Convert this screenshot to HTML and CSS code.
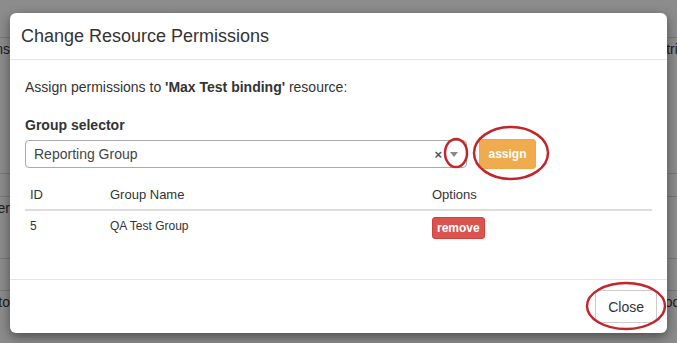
FILE: index.html
```html
<!DOCTYPE html>
<html lang="en">
<head>
    <meta charset="UTF-8">
    <meta name="viewport" content="width=device-width, initial-scale=1.0">
    <title>Change Resource Permissions</title>
    <link rel="stylesheet" href="styles.css">
</head>
<body>
    <!-- page behind the backdrop -->
    <div class="page">
        <div class="bg-row r0"></div>
        <div class="bg-row r1">
            <span class="cut-left">Permissions</span>
            <span class="cut-right">Attributes</span>
        </div>
        <div class="bg-row r2"></div>
        <div class="bg-row r3">
            <span class="cut-left">Owner</span>
        </div>
        <div class="bg-row r4"></div>
        <div class="bg-row r5">
            <span class="cut-left">Created to</span>
            <span class="cut-right">Modified</span>
        </div>
    </div>

    <div class="modal">
        <div class="modal-header">
            <h4 class="modal-title">Change Resource Permissions</h4>
        </div>
        <div class="modal-body">
            <p class="intro">Assign permissions to <b>'Max Test binding'</b> resource:</p>
            <label class="field-label">Group selector</label>
            <div class="selector-row">
                <div class="select-box">
                    <span class="select-value">Reporting Group</span>
                    <span class="select-clear">&times;</span>
                    <span class="select-arrow"></span>
                </div>
                <button class="btn btn-warning">assign</button>
            </div>
            <table class="perm-table">
                <thead>
                    <tr>
                        <th class="col-id">ID</th>
                        <th class="col-name">Group Name</th>
                        <th>Options</th>
                    </tr>
                </thead>
                <tbody>
                    <tr>
                        <td>5</td>
                        <td>QA Test Group</td>
                        <td><button class="btn btn-danger">remove</button></td>
                    </tr>
                </tbody>
            </table>
        </div>
        <div class="modal-footer">
            <button class="btn btn-default">Close</button>
        </div>
    </div>

    <!-- red annotation marks -->
    <svg class="marks" width="677" height="343" viewBox="0 0 677 343">
        <ellipse cx="456" cy="153" rx="11" ry="14" />
        <ellipse cx="511" cy="153" rx="37" ry="26" />
        <ellipse cx="626" cy="306" rx="39" ry="23" />
    </svg>
</body>
</html>
```

FILE: styles.css
```css
body {
    margin: 0;
    width: 677px;
    height: 343px;
    overflow: hidden;
    position: relative;
    background-color: #8c8c8c;
    font-family: "Liberation Sans", Arial, sans-serif;
    font-size: 14px;
    color: #333;
}

/* background page */
.bg-row {
    display: flex;
    justify-content: space-between;
    box-sizing: border-box;
    border-bottom: 1px solid #787878;
    line-height: 20px;
    padding-top: 1px;
    color: #1c1c1c;
}
.r0 { height: 38px; }
.r1 { height: 136px; }
.r2 { height: 23px; }
.r3 { height: 62px; }
.r4 { height: 32px; }
.r5 { height: 52px; border-bottom: none; }
.cut-left {
    width: 10px;
    display: flex;
    justify-content: flex-end;
    overflow: hidden;
    white-space: nowrap;
}
.cut-right {
    width: 24px;
    overflow: hidden;
    white-space: nowrap;
}

/* modal */
.modal {
    position: absolute;
    left: 10px;
    top: 13px;
    width: 657px;
    height: 320px;
    box-sizing: border-box;
    background-color: #fff;
    border-radius: 6px;
    box-shadow: 0 4px 12px rgba(0, 0, 0, 0.45);
    display: flex;
    flex-direction: column;
}
.modal-header {
    padding: 10px 11px;
    border-bottom: 1px solid #e5e5e5;
}
.modal-title {
    margin: 0;
    font-size: 18px;
    font-weight: normal;
    line-height: 26px;
    color: #333;
}
.modal-body {
    padding: 17px 15px 15px;
    flex: 1;
}
.intro {
    margin: 0 0 18px;
    line-height: 20px;
}
.field-label {
    display: block;
    font-weight: bold;
    line-height: 20px;
    margin-bottom: 5px;
}
.selector-row {
    display: flex;
    align-items: center;
    height: 30px;
    margin-top: -1px;
}
.select-box {
    width: 442px;
    height: 28px;
    box-sizing: border-box;
    border: 1px solid #aaa;
    border-radius: 4px;
    display: flex;
    align-items: center;
    padding-left: 8px;
    color: #444;
}
.select-value {
    flex: 1;
}
.select-clear {
    font-size: 13px;
    font-weight: bold;
    color: #555;
    margin-right: 8px;
}
.select-arrow {
    width: 0;
    height: 0;
    border-left: 4px solid transparent;
    border-right: 4px solid transparent;
    border-top: 5px solid #888;
    margin-right: 8px;
}

.btn {
    font-family: "Liberation Sans", Arial, sans-serif;
    border: 1px solid transparent;
    border-radius: 3px;
    cursor: pointer;
}
.btn-warning {
    margin-left: 12px;
    width: 57px;
    height: 30px;
    background-color: #efab4e;
    border-color: #eea84a;
    color: #fff;
    font-weight: bold;
    font-size: 12px;
}
.btn-danger {
    background-color: #d9534f;
    border-color: #d43f3a;
    color: #fff;
    font-weight: bold;
    font-size: 12px;
    line-height: 18px;
    padding: 1px 4px;
    height: 22px;
}
.btn-default {
    background-color: #fff;
    border-color: #ccc;
    border-radius: 4px;
    color: #333;
    font-size: 14px;
    height: 33px;
    padding: 0 12px;
}

.perm-table {
    width: 100%;
    border-collapse: collapse;
    margin: 9px 0 21px;
    font-size: 13px;
}
.perm-table th {
    text-align: left;
    font-weight: normal;
    padding: 7px 5px 4px;
    line-height: 20px;
    border-bottom: 2px solid #ddd;
}
.perm-table td {
    padding: 6px 5px 4px;
    line-height: 18px;
    font-size: 12px;
    vertical-align: top;
}
.col-id {
    width: 70px;
}
.col-name {
    width: 312px;
}

.modal-footer {
    border-top: 1px solid #e5e5e5;
    padding: 10px;
    display: flex;
    justify-content: flex-end;
}

.marks {
    position: absolute;
    left: 0;
    top: 0;
    pointer-events: none;
}
.marks ellipse {
    fill: none;
    stroke: #c0262c;
    stroke-width: 2.5;
}
```
